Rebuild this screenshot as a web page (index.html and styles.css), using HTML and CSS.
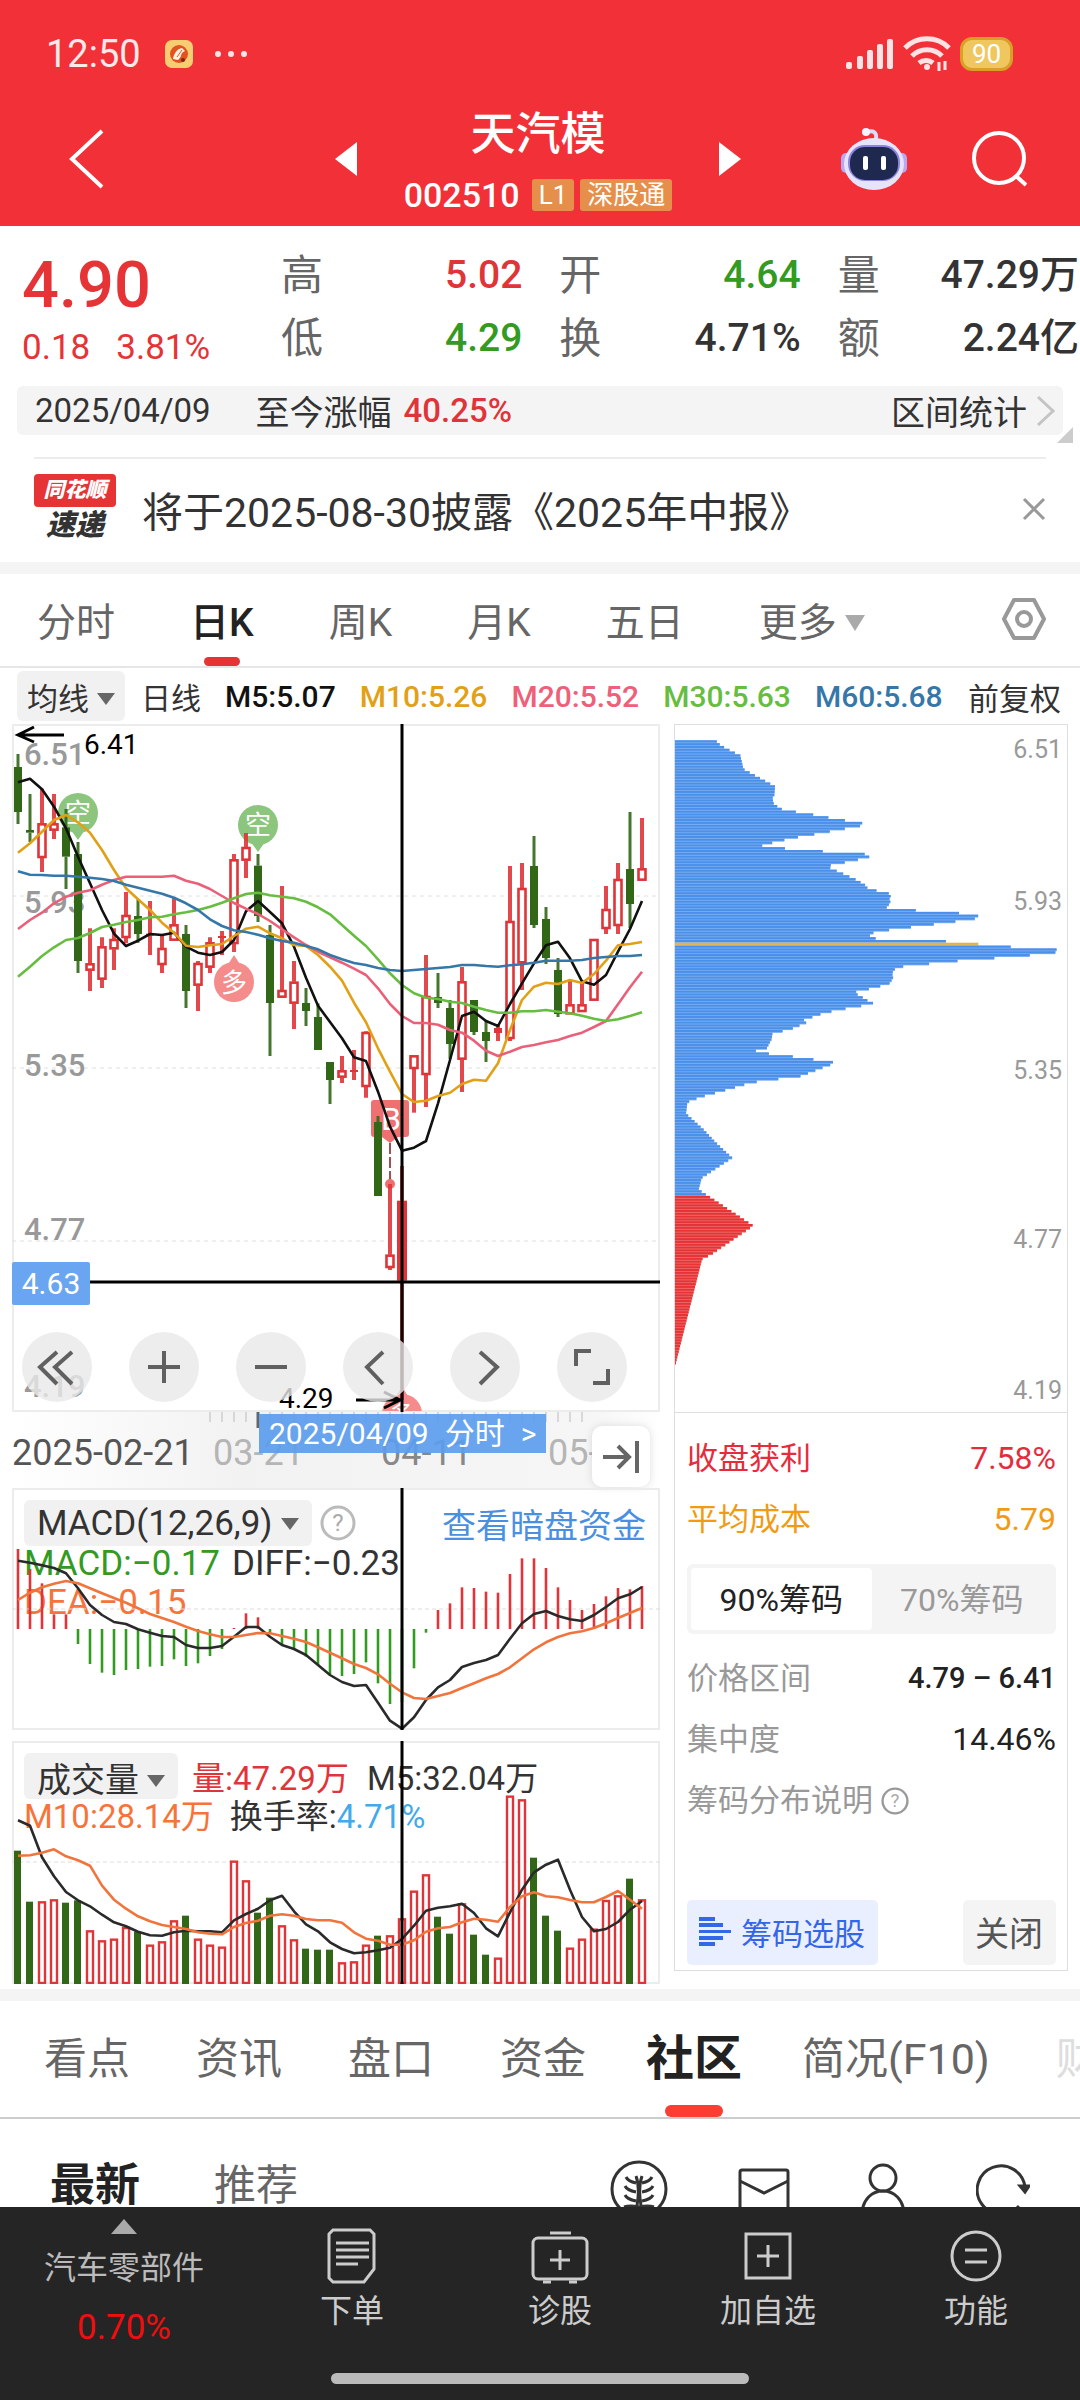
FILE: index.html
```html
<!DOCTYPE html>
<html lang="zh-CN">
<head>
<meta charset="utf-8">
<meta name="viewport" content="width=device-width, initial-scale=1">
<title>天汽模 002510</title>
<link rel="stylesheet" href="styles.css">
</head>
<body>
<div class="app">
  <header class="top">
    <div class="status">
      <span class="clock">12:50</span>
      <svg class="status-app" viewBox="0 0 28 28" aria-hidden="true"><rect width="28" height="28" rx="7" fill="#f7cd73"/><circle cx="14" cy="14" r="9" fill="#e2531f"/><path d="M8 19c1-6 4-10 9-11l3 3c-3 1-4 3-4 6l-3 3z" fill="#fff3e0"/><path d="M12 17l5-7M15 19l3-6" stroke="#e2531f" stroke-width="1"/><circle cx="18" cy="20" r="2" fill="#7a2a14"/></svg>
      <span class="dots"><i></i><i></i><i></i></span>
      <span class="status-right">
        <svg width="48" height="32" viewBox="0 0 48 32" fill="#ffe3e4" aria-hidden="true"><rect x="0" y="24" width="6" height="7" rx="2"/><rect x="11" y="18" width="6" height="13" rx="2"/><rect x="21" y="12" width="6" height="19" rx="2"/><rect x="31" y="6" width="6" height="25" rx="2"/><rect x="41" y="1" width="6" height="30" rx="2"/></svg>
        <svg width="48" height="36" viewBox="0 0 48 36" fill="none" stroke="#ffe3e4" stroke-width="5" aria-hidden="true"><path d="M2 12a31 31 0 0 1 44 0M9 20a21 21 0 0 1 30 0M16 27a11 11 0 0 1 14 0"/><circle cx="24" cy="31" r="3" fill="#ffe3e4" stroke="none"/><path d="M36 26v9M42 25v9" stroke-width="3"/></svg>
        <span class="battery">90</span>
      </span>
    </div>
    <div class="titlebar">
      <button class="icon-btn" aria-label="返回"><svg width="36" height="60" viewBox="0 0 36 60" fill="none" stroke="#fff" stroke-width="4"><path d="M34 2L4 30l30 28"/></svg></button>
      <div class="stock">
        <button class="icon-btn" aria-label="上一只"><svg width="22" height="34" viewBox="0 0 22 34"><path d="M22 0v34L0 17z" fill="#fff"/></svg></button>
        <div class="stock-name">
          <h1>天汽模</h1>
          <p><span class="code">002510</span><span class="tag">L1</span><span class="tag">深股通</span></p>
        </div>
        <button class="icon-btn" aria-label="下一只"><svg width="22" height="34" viewBox="0 0 22 34"><path d="M0 0v34l22-17z" fill="#fff"/></svg></button>
      </div>
      <div class="top-actions">
        <button class="icon-btn" aria-label="智能助手"><svg width="66" height="62" viewBox="0 0 66 62"><path d="M35 11c1-7-3-9-9-7" fill="none" stroke="#dcdcf8" stroke-width="4"/><circle cx="25" cy="4" r="4" fill="#f5f4ff"/><rect x="0" y="25" width="10" height="20" rx="5" fill="#b9a6f4"/><rect x="56" y="25" width="10" height="20" rx="5" fill="#b9a6f4"/><ellipse cx="33" cy="36" rx="30" ry="26" fill="#e6e4fb"/><rect x="7" y="17" width="52" height="36" rx="17" fill="#8b83dd"/><rect x="9" y="19" width="48" height="33" rx="15" fill="#1f2950"/><rect x="22" y="28" width="5" height="14" rx="2" fill="#fff"/><rect x="40" y="28" width="5" height="14" rx="2" fill="#fff"/></svg></button>
        <button class="icon-btn" aria-label="搜索"><svg width="56" height="56" viewBox="0 0 56 56" fill="none" stroke="#fff" stroke-width="4"><circle cx="27" cy="27" r="25"/><path d="M44 45l10 9"/></svg></button>
      </div>
    </div>
  </header>

  <main class="content">
    <section class="quote">
      <div class="price"><strong>4.90</strong><p><span>0.18</span><span>3.81%</span></p></div>
      <dl class="stats">
        <div><dt>高</dt><dd class="up">5.02</dd></div>
        <div><dt>开</dt><dd class="down">4.64</dd></div>
        <div><dt>量</dt><dd>47.29万</dd></div>
        <div><dt>低</dt><dd class="down">4.29</dd></div>
        <div><dt>换</dt><dd>4.71%</dd></div>
        <div><dt>额</dt><dd>2.24亿</dd></div>
      </dl>
    </section>

    <div class="since">
      <span class="since-date">2025/04/09</span><span>至今涨幅</span><span class="since-pct">40.25%</span>
      <a href="#range" class="range">区间统计<svg width="20" height="32" viewBox="0 0 20 32" fill="none" stroke="#c4c4c4" stroke-width="3"><path d="M2 2l15 14L2 30"/></svg></a>
      <i class="corner"></i>
    </div>

    <div class="news">
      <div class="news-logo"><b>同花顺</b><em>速递</em></div>
      <a href="#news">将于2025-08-30披露《2025年中报》</a>
      <button class="icon-btn" aria-label="关闭公告"><svg width="24" height="24" viewBox="0 0 24 24" stroke="#999" stroke-width="3"><path d="M2 2l20 20M22 2L2 22"/></svg></button>
    </div>

    <nav class="periods">
      <button>分时</button><button class="on">日K</button><button>周K</button><button>月K</button><button>五日</button><button class="more">更多<i class="caret light"></i></button>
      <button class="gear" aria-label="设置"><svg width="44" height="44" viewBox="0 0 44 44" fill="none" stroke="#999" stroke-width="4"><path d="M12 3h20l10 19-10 19H12L2 22z" stroke-linejoin="round"/><circle cx="22" cy="22" r="7"/></svg></button>
    </nav>

    <div class="legend">
      <button class="chip">均线<i class="caret"></i></button>
      <span class="period-name">日线</span><b>M5:5.07</b><b class="m10">M10:5.26</b><b class="m20">M20:5.52</b><b class="m30">M30:5.63</b><b class="m60">M60:5.68</b><span class="adjust">前复权</span>
    </div>

    <div class="charts">
      <div class="left">
        <div class="kline">
          <svg id="kline" viewBox="0 0 648 688" role="img" aria-label="日K线图">
            <rect x="1" y="1" width="646" height="686" fill="none" stroke="#ececec" stroke-width="2"/>
            <path d="M0 172h648M0 344h648M0 517h648" stroke="#e0e0e0" stroke-dasharray="4 4"/>
            <g class="axis"><text x="12" y="41">6.51</text><text x="12" y="189">5.93</text><text x="12" y="352">5.35</text><text x="12" y="516">4.77</text><text x="12" y="673">4.19</text></g>
            <g class="badges">
              <g fill="#8cc57e"><path d="M59 106h14l-7 10z"/><circle cx="66" cy="89" r="20"/><path d="M239 118h14l-7 10z"/><circle cx="246" cy="101" r="20"/></g>
              <g fill="#f58c8c"><path d="M215 242h14l-7-11z"/><circle cx="222" cy="258" r="20"/></g>
              <text x="66" y="98">空</text><text x="246" y="110">空</text><text x="222" y="268">多</text>
              <clipPath id="floor"><rect width="648" height="687"/></clipPath>
              <g clip-path="url(#floor)"><path d="M383 674h14l-7-12z" fill="#f58c8c"/><circle cx="390" cy="690" r="20" fill="#f58c8c"/><text x="390" y="700">多</text></g>
              <rect x="359" y="376" width="38" height="37" rx="3" fill="#ee7070"/><path d="M370 413h16l-8 6z" fill="#ee7070"/><text x="379" y="406" class="buy">B</text>
            </g>
            <path d="M378 419v42" stroke="#a05050" stroke-width="2" stroke-dasharray="11 3"/><circle cx="378" cy="460" r="5" fill="#ee7070"/>
            <g id="candles"></g>
            <g id="averages"></g>
            <path d="M390 0v688M0 558h648" stroke="#000" stroke-width="3"/>
            <path d="M52 11H6M22 3L6 11l16 7" class="pointer"/><text x="72" y="30" class="extreme">6.41</text>
            <path d="M344 676h44M372 668l16 8-16 8" class="pointer"/><text x="267" y="684" class="extreme">4.29</text>
          </svg>
          <span class="cursor-price">4.63</span>
          <div class="tools">
            <button aria-label="快退"><svg viewBox="0 0 70 70"><path d="M35 20L18 35l17 17M50 20L33 35l17 17"/></svg></button>
            <button aria-label="放大"><svg viewBox="0 0 70 70"><path d="M35 19v32M19 35h32"/></svg></button>
            <button aria-label="缩小"><svg viewBox="0 0 70 70"><path d="M19 35h32"/></svg></button>
            <button aria-label="左移"><svg viewBox="0 0 70 70"><path d="M40 20L24 35l16 17"/></svg></button>
            <button aria-label="右移"><svg viewBox="0 0 70 70"><path d="M30 20l17 15-17 17"/></svg></button>
            <button aria-label="全屏"><svg viewBox="0 0 70 70"><path d="M19 34V19h15M51 37v14H36"/></svg></button>
          </div>
        </div>
        <div class="dates">
          <svg id="ticks" viewBox="0 0 648 76" aria-hidden="true"><g class="date-text"><text x="0" y="53">2025-02-21</text><text x="201" y="53" class="pale">03-21</text><text x="369" y="53" class="mid">04-11</text><text x="536" y="53" class="pale">05-</text></g></svg>
          <a href="#minute" class="cursor-date"><span>2025/04/09</span><span>分时</span><span>&gt;</span></a>
          <button class="latest" aria-label="回到最新"><svg width="36" height="34" viewBox="0 0 36 34" fill="none" stroke="#666" stroke-width="4"><path d="M0 17h26M15 6l11 11-11 11M34 1v32"/></svg></button>
        </div>
        <div class="panel macd">
          <div class="panel-head"><button class="chip">MACD(12,26,9)<i class="caret"></i></button><svg class="help" viewBox="0 0 36 36"><circle cx="18" cy="18" r="16" fill="none" stroke="#bbb" stroke-width="3"/><text x="18" y="26">?</text></svg><a href="#dark">查看暗盘资金</a></div>
          <p><span class="down">MACD:−0.17</span><span>DIFF:−0.23</span></p>
          <p><span class="orange">DEA:−0.15</span></p>
          <svg id="macd" class="overlay" viewBox="0 0 648 242" role="img" aria-label="MACD"><rect x="1" y="1" width="646" height="240" fill="none" stroke="#ececec" stroke-width="2"/><path d="M0 121h648" stroke="#ddd" stroke-dasharray="4 3"/></svg>
        </div>
        <div class="panel volume">
          <div class="panel-head"><button class="chip">成交量<i class="caret"></i></button><span class="up">量:47.29万</span><span class="m5">M5:32.04万</span></div>
          <p><span class="orange">M10:28.14万</span><span class="rate">换手率:<span class="sky">4.71%</span></span></p>
          <svg id="volume" class="overlay" viewBox="0 0 648 243" role="img" aria-label="成交量"><rect x="1" y="1" width="646" height="241" fill="none" stroke="#ececec" stroke-width="2"/><path d="M0 121h648" stroke="#ddd" stroke-dasharray="4 3"/></svg>
        </div>
      </div>

      <aside class="cost">
        <svg id="cost" viewBox="0 0 392 687" role="img" aria-label="筹码分布"><g class="cost-axis"><text x="387" y="33">6.51</text><text x="387" y="185">5.93</text><text x="387" y="354">5.35</text><text x="387" y="523">4.77</text><text x="387" y="674">4.19</text></g></svg>
        <div class="cost-info">
          <div class="row red"><span>收盘获利</span><span class="figure">7.58%</span></div>
          <div class="row amber"><span>平均成本</span><span class="figure">5.79</span></div>
          <div class="segment"><button class="on">90%筹码</button><button>70%筹码</button></div>
          <div class="row"><span>价格区间</span><b>4.79 – 6.41</b></div>
          <div class="row"><span>集中度</span><span class="figure ink">14.46%</span></div>
          <div class="row note"><span>筹码分布说明</span><svg class="help small" viewBox="0 0 36 36"><circle cx="18" cy="18" r="16" fill="none" stroke="#999" stroke-width="3"/><text x="18" y="26">?</text></svg></div>
          <div class="cost-actions">
            <button class="pick"><svg width="32" height="32" viewBox="0 0 32 32" fill="#3466ea"><path d="M0 1h16v4H0zM0 7h24v4H0zM0 14h32v3H0zM0 20h24v4H0zM0 26h16v4H0z"/></svg>筹码选股</button>
            <button class="shut">关闭</button>
          </div>
        </div>
      </aside>
    </div>

    <nav class="sections">
      <a href="#view">看点</a><a href="#info">资讯</a><a href="#book">盘口</a><a href="#fund">资金</a><a href="#community" class="on">社区</a><a href="#f10">简况(F10)</a><a href="#finance" class="fade">财务</a>
    </nav>

    <div class="feed">
      <b>最新</b><a href="#rec">推荐</a>
      <div class="feed-icons">
        <svg width="58" height="58" viewBox="0 0 58 58"><circle cx="29" cy="29" r="27"/><path d="M26 16c3 8 3 18 1 30M32 16c-3 8-3 18-1 30M16 17c2 4 5 5 10 6M15 26c2 4 6 5 11 6M15 35c2 4 6 5 11 6M42 17c-2 4-5 5-10 6M43 26c-2 4-6 5-11 6M43 35c-2 4-6 5-11 6M14 47c6-2 10-1 15 0 5-1 9-2 15 0"/></svg>
        <svg width="52" height="52" viewBox="0 0 52 52"><rect x="2" y="7" width="48" height="40" rx="2"/><path d="M2 18l24 12 24-12"/></svg>
        <svg width="46" height="52" viewBox="0 0 46 52"><circle cx="23" cy="15" r="13"/><path d="M2 52c0-32 42-32 42 0"/></svg>
        <svg width="54" height="54" viewBox="0 0 54 54"><path d="M43 44A24 24 0 1 1 49 25"/><path d="M44 24h9l-4 6z" fill="#333"/></svg>
      </div>
    </div>
  </main>

  <footer class="bottom">
    <nav class="dock">
      <a href="#sector" class="sector"><i></i><span>汽车零部件</span><b>0.70%</b></a>
      <button><svg width="50" height="56" viewBox="0 0 50 56"><path d="M6 2h37l4 4v35l-10 13H6l-4-4V6z"/><path d="M9 15h33M9 22h33M9 29h33M9 36h22"/></svg>下单</button>
      <button><svg width="58" height="56" viewBox="0 0 58 56"><path d="M19 5h21"/><rect x="2" y="10" width="54" height="41" rx="5"/><path d="M29 22v20M19 32h20M12 54h8M38 54h8"/></svg>诊股</button>
      <button><svg width="50" height="56" viewBox="0 0 50 56"><rect x="3" y="6" width="44" height="44"/><path d="M25 17v22M14 28h22"/></svg>加自选</button>
      <button><svg width="52" height="56" viewBox="0 0 52 56"><circle cx="26" cy="28" r="24"/><path d="M15 22h22M15 34h22"/></svg>功能</button>
    </nav>
    <i class="home"></i>
  </footer>
</div>
<script src="charts.js"></script>
</body>
</html>
```

FILE: styles.css
```css
* { box-sizing: border-box; margin: 0; padding: 0; }
body { font-family: Roboto, "Noto Sans CJK SC", sans-serif; color: #333; background: #fff; }
button { font: inherit; color: inherit; background: none; border: 0; cursor: pointer; }
a { color: inherit; text-decoration: none; }
svg { display: block; flex: none; }
.app { display: flex; flex-direction: column; height: 100vh; }

.top { background: #f23038; color: #fff; flex: none; }
.status { display: flex; align-items: center; height: 108px; padding: 0 67px 0 46px; }
.clock { font-size: 38px; line-height: 48px; color: #ffe9e9; }
.status-app { width: 28px; height: 28px; margin-left: 24px; }
.dots { display: flex; gap: 7px; margin-left: 22px; }
.dots i { width: 6px; height: 6px; border-radius: 50%; background: #ffe3e4; }
.status-right { display: flex; align-items: center; gap: 9px; margin-left: auto; }
.battery { width: 53px; height: 34px; border-radius: 12px; border: 3px solid #d99f26; background: #f0c75e; font-size: 26px; line-height: 28px; text-align: center; }
.titlebar { display: grid; grid-template-columns: 1fr 406px 1fr; align-items: center; height: 118px; padding: 0 52px 18px 68px; }
.icon-btn { display: block; justify-self: start; }
.stock { display: flex; align-items: center; justify-content: space-between; margin-left: -10px; margin-right: 10px; }
.stock-name { text-align: center; }
.stock-name h1 { font-size: 45px; line-height: 54px; font-weight: 500; }
.stock-name p { display: flex; gap: 6px; align-items: center; justify-content: center; line-height: 36px; height: 66px; }
.code { font-size: 34px; font-weight: 500; margin-right: 6px; }
.tag { font-size: 26px; line-height: 32px; padding: 0 7px; border-radius: 3px; background: #e58f4b; }
.titlebar .stock-name { margin-bottom: -18px; }
.titlebar > * { transform: none; }
.top-actions { display: flex; align-items: center; justify-content: flex-end; gap: 65px; }

.content { flex: 1; min-height: 0; overflow-y: auto; scrollbar-width: none; }
.up { color: #df3538; }
.down { color: #339a22; }
.orange { color: #f6743a; }
.sky { color: #42a9ea; }
.quote { display: flex; height: 160px; padding: 18px 1px 0 22px; }
.price { flex: 222; color: #e63335; }
.price strong { display: block; font-size: 65px; line-height: 82px; font-weight: 500; }
.price p { display: flex; gap: 26px; font-size: 35px; line-height: 44px; }
.stats { flex: 798; display: grid; grid-template-columns: repeat(3, 1fr); column-gap: 37px; align-content: start; margin-left: 37px; font-size: 39px; line-height: 63px; }
.stats div { display: flex; justify-content: space-between; }
.stats dt { color: #666; font-size: 42px; }
.stats dd { font-weight: 500; white-space: nowrap; }
.since { position: relative; display: flex; align-items: center; height: 49px; margin: 0 17px; padding: 0 7px 0 18px; background: #f4f4f4; border-radius: 6px; font-size: 34px; }
.since-date { font-size: 33px; margin-right: 45px; }
.since-pct { font-size: 33px; font-weight: 500; color: #df3538; margin-left: 12px; }
.range { display: flex; align-items: center; gap: 9px; margin-left: auto; }
.corner { position: absolute; right: -10px; bottom: -8px; border: 8px solid; border-color: transparent #ccc #ccc transparent; }
.news { display: flex; align-items: center; height: 105px; margin: 22px 34px 0; padding-bottom: 4px; border-top: 2px solid #ececec; font-size: 41px; }
.news a { margin-left: 26px; }
.news .icon-btn { margin-left: auto; }
.news-logo { width: 82px; font-style: italic; font-weight: 900; text-align: center; }
.news-logo b { display: block; background: #e63335; color: #fff; border-radius: 4px; font-size: 21px; line-height: 33px; }
.news-logo em { display: block; font-size: 29px; line-height: 36px; }
.periods { display: flex; align-items: center; gap: 75px; height: 106px; padding: 0 34px 0 37px; border-top: 12px solid #f4f4f4; border-bottom: 2px solid #e6e6e6; font-size: 39px; color: #666; }
.periods button { position: relative; height: 92px; padding-bottom: 2px; }
.periods .on { color: #222; font-weight: 500; }
.periods .on::after { content: ""; position: absolute; left: 50%; bottom: 0; width: 36px; height: 9px; margin-left: -18px; border-radius: 5px; background: #e63335; }
.periods .gear { margin-left: auto; }
.caret { display: inline-block; border: 9px solid transparent; border-top: 12px solid #666; border-bottom: 0; margin-left: 8px; vertical-align: 5px; }
.caret.light { border-width: 16px 10px 0; border-top-color: #aaa; }
.chip { background: #f1f1f1; border-radius: 6px; padding: 0 13px; white-space: nowrap; }
.legend { display: flex; align-items: center; gap: 24px; height: 56px; padding: 0 19px 0 17px; font-size: 30px; white-space: nowrap; }
.legend b { font-weight: 500; color: #111; }
.legend .chip { height: 50px; padding: 0 10px; font-size: 31px; margin-right: -8px; }
.legend .m10 { color: #e2a016; }
.legend .m20 { color: #ee6079; }
.legend .m30 { color: #66bd40; }
.legend .m60 { color: #3477a8; }
.legend .adjust { margin-left: auto; font-size: 31px; }

.charts { display: grid; grid-template-columns: 648fr 394fr; column-gap: 14px; align-items: start; padding: 0 12px 5px; }
.charts svg { width: 100%; }
.kline, .dates, .panel { position: relative; }
svg text { font-family: Roboto, "Noto Sans CJK SC", sans-serif; }
.axis text { font-size: 31px; font-weight: 500; fill: #999; }
.badges text { font-size: 26px; fill: #fff; text-anchor: middle; }
.badges .buy { font-size: 32px; }
.extreme { font-size: 28px; fill: #000; }
.pointer { fill: none; stroke: #000; stroke-width: 3; }
.cursor-price { position: absolute; left: 0; top: 79%; width: 78px; line-height: 43px; margin-top: -6px; text-align: center; font-size: 30px; color: #fff; background: #69a5f0; border-radius: 2px; }
.tools { position: absolute; left: 10px; bottom: 10px; display: flex; gap: 37px; }
.tools button { width: 70px; height: 70px; border-radius: 50%; background: rgba(232, 232, 232, .8); }
.tools svg { fill: none; stroke: #606060; stroke-width: 4; }
.dates { background: linear-gradient(90deg, #fff, #f2f2f2 35%, #f6f6f6 90%, #fff); }
.date-text text { font-size: 36px; fill: #555; }
.date-text .pale { fill: #b5b5b5; }
.date-text .mid { fill: #888; }
.cursor-date { position: absolute; left: 247px; top: 2px; display: flex; gap: 16px; padding: 0 10px; font-size: 30px; line-height: 39px; color: #fff; background: rgba(92, 157, 238, .92); }
.latest { position: absolute; right: 10px; top: 14px; width: 58px; height: 61px; padding: 0 11px; border-radius: 10px; background: #fff; box-shadow: 0 0 8px rgba(0, 0, 0, .12); }
.panel { height: 242px; padding: 12px; font-size: 34px; overflow: hidden; }
.panel-head { display: flex; align-items: center; height: 46px; }
.panel-head .chip { height: 46px; }
.macd .chip, .macd p { font-size: 35px; }
.panel-head a { margin-left: auto; margin-right: 2px; color: #4a90e2; }
.panel p { display: flex; gap: 12px; line-height: 39px; margin-top: -2px; white-space: nowrap; }
.panel p + p { margin-top: 0; }
.overlay { position: absolute; left: 0; top: 0; pointer-events: none; }
.charts .help { width: 36px; height: 36px; margin-left: 8px; }
.help text { font-size: 24px; text-anchor: middle; fill: #aaa; }
.volume { height: 243px; margin-top: 11px; font-size: 33px; }
.volume .chip { font-size: 34px; }
.volume .up { margin-left: 14px; }
.volume .m5 { margin-left: 18px; }
.volume .rate { margin-left: 4px; }

.cost { border: 1px solid #dedede; }
.cost-axis text { font-size: 25px; text-anchor: end; fill: #999; }
.cost-info { border-top: 1px solid #dedede; padding: 15px 11px 5px 12px; font-size: 31px; color: #999; }
.row { display: flex; justify-content: space-between; align-items: center; line-height: 61px; }
.row .figure { font-size: 32px; }
.row b { font-size: 29px; font-weight: 500; color: #222; }
.red { color: #e62c3c; }
.amber { color: #f29a12; }
.row .ink { color: #222; }
.row.note { justify-content: flex-start; }
.charts .help.small { width: 28px; height: 28px; }
.segment { display: grid; grid-template-columns: 1fr 1fr; height: 70px; margin: 14px 0; padding: 4px; background: #f4f4f4; border-radius: 6px; }
.segment button { padding-bottom: 4px; font-size: 32px; }
.segment .on { background: #fff; color: #222; border-radius: 4px; }
.cost-actions { display: flex; justify-content: space-between; margin-top: 69px; }
.cost-actions button { height: 65px; border-radius: 5px; display: flex; align-items: center; gap: 10px; padding: 0 13px 2px 12px; }
.cost-actions svg { width: 32px; }
.cost-actions .pick { background: #e9efff; color: #3466ea; }
.cost-actions .shut { background: #f4f4f4; color: #555; font-size: 34px; }

.sections { display: flex; align-items: center; gap: 66px; height: 130px; padding-left: 44px; border-top: 12px solid #f4f4f4; border-bottom: 2px solid #ccc; overflow: hidden; font-size: 43px; line-height: 116px; color: #666; white-space: nowrap; }
.sections .on { position: relative; font-size: 48px; font-weight: 700; color: #222; margin: 0 -6px; }
.sections .on::after { content: ""; position: absolute; left: 50%; bottom: 0; width: 58px; height: 12px; margin-left: -29px; border-radius: 6px; background: #fc3d33; }
.sections .fade { color: #ddd; }
.feed { display: flex; align-items: center; height: 140px; padding: 0 50px; font-size: 42px; line-height: 60px; color: #666; }
.feed b, .feed a { padding-bottom: 6px; }
.feed b { font-size: 45px; color: #222; margin-right: 74px; }
.feed-icons { display: flex; align-items: center; margin-left: auto; gap: 70px; }
.feed-icons svg { fill: none; stroke: #333; stroke-width: 3; }

.bottom { flex: none; height: 193px; background: #252525; color: #ccc; }
.dock { display: grid; grid-template-columns: 248fr 208fr 208fr 208fr 208fr; height: 166px; font-size: 32px; }
.dock button { display: flex; flex-direction: column; align-items: center; padding-top: 21px; gap: 3px; line-height: 48px; }
.dock svg { fill: none; stroke: #ccc; stroke-width: 3; }
.sector { display: flex; flex-direction: column; align-items: center; padding-top: 12px; color: #bbb; }
.sector i { border: 13px solid transparent; border-bottom: 15px solid #aaa; border-top: 0; }
.sector span { line-height: 68px; }
.sector b { line-height: 52px; font-size: 35px; font-weight: 400; color: #f00e0e; }
.home { display: block; width: 418px; height: 11px; margin: 0 auto; border-radius: 6px; background: #bbb; }
```

FILE: charts.js
```js
const NS = 'http://www.w3.org/2000/svg';
const RED = '#df3538', GREEN = '#326717';
const x = i => 6 + 12 * i;

function add(parent, name, attrs) {
  const el = document.createElementNS(NS, name);
  for (const key in attrs) el.setAttribute(key, attrs[key]);
  parent.appendChild(el);
  return el;
}

// Values are stored in thirds of a unit, counted from each panel's own origin.
function line(parent, values, top, color) {
  const points = values.map((v, i) => x(i) + ',' + ((v - top) / 3).toFixed(1)).join(' ');
  add(parent, 'polyline', { points, fill: 'none', stroke: color, 'stroke-width': 2.6, 'stroke-linejoin': 'round' });
}

// direction, high, body top, body bottom, low
const candles = [
  ['G',132,171,306,342],['G',252,360,368,396],['R',236,340,444,486],['R',252,340,362,387],['G',297,352,440,537],
  ['G',396,432,753,789],['R',655,760,782,843],['R',682,709,809,834],['R',655,687,718,780],['R',546,615,684,700],
  ['G',567,618,672,698],['R',573,671,676,735],['R',675,714,765,789],['R',564,643,692,692],['G',645,672,843,894],
  ['R',753,759,827,903],['R',682,697,773,789],['R',663,678,683,735],['R',432,448,702,726],['R',369,411,452,504],
  ['G',432,467,618,636],['G',645,675,879,1038],['R',528,840,863,863],['R',753,815,881,957],['G',834,879,903,948],
  ['G',880,921,1020,1020],['G',1056,1056,1110,1182],['R',1038,1081,1103,1119],['R',1020,1080,1085,1110],['R',964,966,1131,1163],
  ['G',1218,1236,1458,1458],['R',1422,1634,1674,1680],['R',1368,1472,1712,2070],['R',1036,1036,1077,1208],['R',735,858,1095,1191],
  ['G',789,861,879,894],['G',870,894,1002,1047],['R',771,814,1049,1146],['G',870,870,966,975],['G',932,966,993,1056],
  ['R',945,954,969,993],['R',468,633,987,993],['R',459,534,760,840],['G',378,468,645,654],['G',591,627,744,762],
  ['G',744,780,912,921],['R',808,883,913,913],['R',812,883,906,906],['R',687,687,872,872],['R',528,597,657,672],
  ['R',459,507,648,672],['G',306,477,582,654],['R',324,475,512,512]
];
const candleLayer = document.getElementById('candles');
const py = v => (v - 42) / 3;
candles.forEach(([dir, high, top, bottom, low], i) => {
  const color = dir === 'R' ? RED : GREEN;
  const filled = dir === 'G' || i === 32 || bottom - top < 18;
  add(candleLayer, 'path', {
    d: `M${x(i)} ${py(high)}V${py(top)}M${x(i)} ${py(bottom)}V${py(low)}`,
    stroke: color, 'stroke-width': dir === 'R' ? 4 : 3, 'stroke-opacity': .9
  });
  if (filled) add(candleLayer, 'rect', { x: x(i) - (i === 32 ? 5 : 4), y: py(top), width: i === 32 ? 10 : 8, height: Math.max(2, (bottom - top) / 3), fill: color });
  else add(candleLayer, 'rect', { x: x(i) - 3.5, y: py(top) + 1, width: 7, height: (bottom - top) / 3 - 2, fill: 'none', stroke: color, 'stroke-width': 2.6 });
});

const averages = document.getElementById('averages');
line(averages, [217,206,238,290,355,440,520,600,671,708,692,672,675,668,710,728,735,726,690,604,573,606,640,710,803,887,936,985,1042,1053,1145,1250,1322,1313,1293,1180,1050,918,905,933,948,882,820,760,706,695,745,814,824,795,725,657,573], 42, '#111');
line(averages, [428,400,365,330,315,337,368,420,480,535,568,600,638,668,707,711,706,702,678,656,650,670,685,705,708,735,770,812,878,937,1015,1085,1152,1176,1172,1158,1148,1122,1109,1112,1060,960,870,830,818,822,810,819,792,752,706,702,696], 42, '#e2a016');
line(averages, [657,630,608,580,560,548,541,524,510,500,500,500,500,497,512,521,537,558,579,596,612,633,658,682,705,725,742,758,776,795,835,882,918,939,939,944,960,968,992,1022,1038,1025,1011,1005,997,990,978,968,951,933,883,832,785], 42, '#ea6079');
line(averages, [800,770,738,712,690,684,669,651,644,636,630,622,620,613,607,600,590,578,565,552,548,556,560,565,575,592,613,645,677,708,748,790,825,850,863,867,875,879,890,900,908,908,904,904,900,905,910,917,926,933,928,918,907], 42, '#66bd40');
line(averages, [484,494,495,497,497,500,503,507,513,524,533,542,551,563,580,600,628,648,661,666,674,685,693,698,708,718,735,748,759,765,774,780,783,780,777,774,771,765,765,768,770,766,763,758,752,752,752,750,744,741,738,738,735], 42, '#3477a8');

const ticks = document.getElementById('ticks');
for (let i = 16; i < 48; i++) {
  add(ticks, 'path', { d: `M${x(i)} 0v${i === 20 || i === 34 ? 16 : 10}`, stroke: i === 20 ? '#666' : '#bbb', 'stroke-width': i === 20 ? 3 : 1 });
}

const macd = document.getElementById('macd');
[207,267,310,403,403,492,552,578,585,570,567,560,558,538,558,550,528,507,444,400,412,462,492,510,530,555,582,588,582,547,610,672,666,565,458,390,370,322,324,335,338,282,235,235,264,322,360,390,372,349,324,328,318].forEach((v, i) => {
  add(macd, 'path', { d: `M${x(i)} 141V${(v - 24) / 3}`, stroke: v < 447 ? RED : '#339a22', 'stroke-width': 2.6 });
});
line(macd, [242,248,256,264,280,325,375,405,426,432,448,458,468,471,495,504,504,498,470,441,441,470,495,507,525,555,585,606,618,615,668,722,746,712,660,622,600,561,549,540,525,476,430,402,393,408,418,423,405,381,355,343,321], 24, '#2a2a2a');
line(macd, [360,338,322,311,303,310,325,340,354,368,385,402,414,426,440,453,463,471,471,465,459,460,468,476,486,502,518,535,552,564,583,611,637,654,657,648,639,624,610,595,582,562,535,508,487,471,460,454,444,430,414,399,384], 24, '#f0743c');
add(macd, 'path', { d: 'M390 0v242', stroke: '#000', 'stroke-width': 3 });

const volume = document.getElementById('volume');
[363,516,515,509,519,512,602,632,627,592,606,645,635,572,558,627,645,651,393,452,549,504,587,629,657,660,660,698,695,645,618,617,566,483,434,561,612,521,615,675,684,198,209,384,558,603,654,627,597,511,497,447,509].forEach((v, i) => {
  const y = (v - 34) / 3;
  const green = [0,1,4,5,10,14,20,21,24,25,26,30,35,36,38,39,43,44,45,51].includes(i);
  if (green) add(volume, 'rect', { x: x(i) - 4, y, width: 7, height: 243 - y, fill: GREEN });
  else add(volume, 'rect', { x: x(i) - 3, y: y + 1, width: 6, height: 241 - y, fill: '#fff', stroke: RED, 'stroke-width': 2.4 });
});
line(volume, [272,288,383,440,487,512,530,555,578,590,606,617,618,608,603,605,605,608,572,553,537,512,498,545,584,605,638,658,671,668,662,654,628,588,543,534,530,522,550,596,620,548,480,428,405,390,480,562,605,598,577,540,514], 34, '#2a2a2a');
line(volume, [378,377,369,359,380,392,408,468,510,537,560,575,586,592,598,608,612,614,592,580,573,558,554,558,568,572,572,579,608,627,633,645,645,632,606,596,592,578,567,570,576,532,500,488,500,503,511,518,518,502,484,510,537], 34, '#f0743c');
add(volume, 'path', { d: 'M390 0v243', stroke: '#000', 'stroke-width': 3 });

// Holding cost profile: [row position, bar end]; rows between two entries are interpolated.
const profile = [[66,170],[72,178],[79,193],[91,225],[97,241],[122,249],[128,254],[140,285],[152,315],[164,345],[183,343],[190,337],[203,342],[215,369],[221,420],[227,471],[234,521],[240,573],[246,623],[252,590],[258,540],[265,491],[271,443],[277,395],[283,360],[289,324],[295,298],[301,409],[307,520],[313,648],[319,621],[326,580],[332,539],[338,498],[344,517],[356,555],[368,591],[380,618],[387,624],[393,662],[399,697],[405,690],[411,688],[417,692],[423,685],[429,679],[436,805],[442,942],[448,960],[454,938],[460,867],[467,796],[473,725],[479,665],[485,627],[491,631],[497,654],[503,940],[509,960],[515,1082],[521,1221],[527,1177],[534,1080],[540,965],[546,860],[552,786],[558,709],[565,702],[571,696],[583,700],[589,692],[595,687],[601,650],[607,618],[613,579],[619,597],[632,627],[638,645],[644,585],[650,545],[656,503],[662,474],[668,452],[674,427],[680,441],[686,414],[693,393],[699,357],[705,330],[711,338],[717,333],[735,320],[742,276],[748,347],[754,417],[760,474],[766,532],[772,505],[779,480],[785,459],[791,437],[797,415],[803,333],[809,276],[815,246],[822,215],[828,185],[834,155],[840,125],[846,103],[852,82],[877,78],[883,88],[913,133],[938,165],[974,218],[980,202],[1005,150],[1011,138],[1017,125],[1042,116],[1048,128],[1060,153],[1121,280],[1127,268],[1182,157],[1188,142],[1194,126],[1424,46]];
const cost = document.getElementById('cost');
let k = 0;
for (let n = 0; n < 222; n++) {
  const row = 66.4 + n * 6.125;
  while (k < profile.length - 2 && profile[k + 1][0] < row) k++;
  const [r0, w0] = profile[k], [r1, w1] = profile[k + 1];
  const end = w0 + (w1 - w0) * Math.min(1, Math.max(0, (row - r0) / (r1 - r0)));
  const width = Math.max(1, (end - 45) / 3), y = (row - 33) / 2.178;
  const color = n === 72 ? '#dfb24e' : row > 1057 ? '#e63335' : '#4a90ea';
  add(cost, 'rect', { x: 0, y, width, height: 2.9, fill: color, opacity: .72 });
  add(cost, 'rect', { x: 0, y, width, height: 2, fill: color });
}
```
